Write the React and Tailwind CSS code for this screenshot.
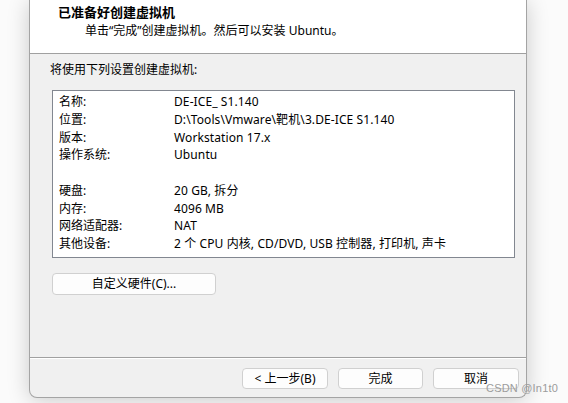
export default function App() {
  const rows = [
    ["名称:", "DE-ICE_ S1.140"],
    ["位置:", "D:\\Tools\\Vmware\\靶机\\3.DE-ICE S1.140"],
    ["版本:", "Workstation 17.x"],
    ["操作系统:", "Ubuntu"],
    ["", ""],
    ["硬盘:", "20 GB, 拆分"],
    ["内存:", "4096 MB"],
    ["网络适配器:", "NAT"],
    ["其他设备:", "2 个 CPU 内核, CD/DVD, USB 控制器, 打印机, 声卡"],
  ];
  return (
    <div className="relative w-[568px] h-[403px] overflow-hidden bg-[#fbfbfb] font-['Noto_Sans','Noto_Sans_CJK_SC',sans-serif] text-[12px] text-black">
      <div className="ml-[29px] w-[498px] h-[398px] flex flex-col bg-[#f0f0f0] border-x border-b border-[#a4a4a4] rounded-b-[8px] overflow-hidden shadow-[0_2px_22px_rgba(0,0,0,0.2)]">
        <div className="h-[54px] shrink-0 bg-white border-b border-[#a0a0a0] flex flex-col">
          <div className="pl-[28px] pt-[4px] leading-[16px] font-bold text-[13px]">已准备好创建虚拟机</div>
          <div className="pl-[55px] mt-[3px] leading-[16px]">单击“完成”创建虚拟机。然后可以安装 Ubuntu。</div>
        </div>
        <div className="flex-1 flex flex-col">
          <div className="pl-[20px] mt-[8px] leading-[16px]">将使用下列设置创建虚拟机:</div>
          <div className="ml-[22px] mt-[12px] w-[463px] h-[168px] bg-white border border-[#828790] pt-[2px]">
            {rows.map(([k, v], i) => (
              <div key={i} className="flex h-[17.75px] leading-[17.75px] whitespace-nowrap">
                <div className="pl-[6px] w-[121px] shrink-0">{k}</div>
                <div className="tracking-[0.1px]">{v}</div>
              </div>
            ))}
          </div>
          <div className="ml-[22px] mt-[15px] w-[164px] h-[22px] rounded-[4px] border border-[#d0d0d0] bg-[#fdfdfd] flex items-center justify-center leading-none">
            自定义硬件(C)...
          </div>
        </div>
        <div className="h-[2px] shrink-0 border-t border-[#a0a0a0] border-b border-b-white"></div>
        <div className="h-[38px] shrink-0 flex justify-end items-start gap-[10px] pr-[7px] pt-[9px]">
          <div className="w-[86px] h-[21px] rounded-[4px] border border-[#d0d0d0] bg-[#fdfdfd] flex items-center justify-center leading-none">&lt; 上一步(B)</div>
          <div className="w-[85px] h-[21px] rounded-[4px] border border-[#d0d0d0] bg-[#fdfdfd] flex items-center justify-center leading-none">完成</div>
          <div className="w-[86px] h-[21px] rounded-[4px] border border-[#d0d0d0] bg-[#fdfdfd] flex items-center justify-center leading-none">取消</div>
        </div>
      </div>
      <div className="absolute left-[486px] top-[381px] text-[11px] leading-[14px] text-[#9c9c9c] font-['Liberation_Sans',sans-serif] tracking-[0.2px]">CSDN @In1t0</div>
    </div>
  );
}
